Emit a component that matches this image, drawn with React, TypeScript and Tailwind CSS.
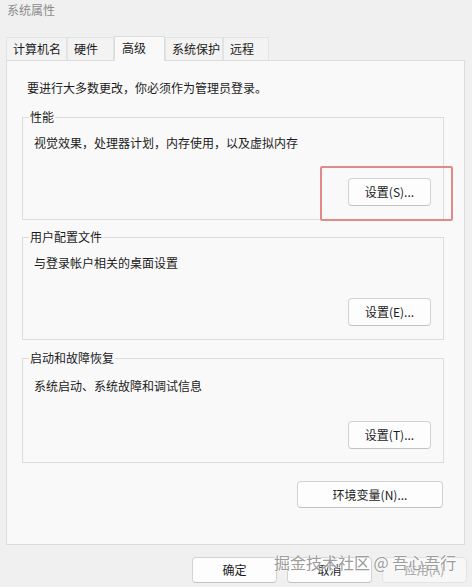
import React from 'react';

const font = { fontFamily: '"Noto Sans CJK SC", "Noto Sans", sans-serif' };

const tabs = [
  { label: '计算机名', w: 'w-[61px]' },
  { label: '硬件', w: 'w-[47px]' },
  { label: '高级', w: 'w-[51px]', active: true },
  { label: '系统保护', w: 'w-[58px]' },
  { label: '远程', w: 'w-[46px]' },
];

function WinButton({ children, className = '', disabled = false }: { children: React.ReactNode; className?: string; disabled?: boolean }) {
  return (
    <button
      disabled={disabled}
      className={
        'flex items-center justify-center rounded-[4px] border text-[12px] leading-[16px] ' +
        (disabled
          ? 'border-[#e3e3e3] bg-[#f7f7f7] text-[#a0a0a0] '
          : 'border-[#d2d2d2] border-b-[#c2c2c2] bg-[#fdfdfd] text-[#1b1b1b] ') +
        className
      }
    >
      {children}
    </button>
  );
}

function GroupBox({ title, desc, button, descTop = 'mt-[10px]' }: { title: string; desc: string; button: string; descTop?: string }) {
  return (
    <fieldset className="mx-[15px] mr-[20px] border border-[#dcdcdc] pl-[7px] pr-[12px] pb-[13px]">
      <legend className="-ml-px px-[1px] text-[12px] leading-[16px] text-[#1b1b1b]">{title}</legend>
      <p className={`ml-[4px] text-[12px] leading-[16px] text-[#1b1b1b] ${descTop}`}>{desc}</p>
      <div className="mt-[27px] flex justify-end">
        <WinButton className="h-[28px] w-[83px]">{button}</WinButton>
      </div>
    </fieldset>
  );
}

export default function App() {
  return (
    <div className="relative h-[587px] w-[472px] overflow-hidden bg-[#f0f0f0]" style={font}>
      <div className="h-[36px] px-[7px] pt-[2px] text-[12px] leading-[16px] text-[#8c8c8c]">系统属性</div>

      <div className="flex h-[24px] items-end px-[6px]">
        {tabs.map((t) =>
          t.active ? (
            <div
              key={t.label}
              className={`relative z-10 -mb-px flex h-[25px] items-start border border-b-0 border-[#dcdcdc] bg-[#f9f9f9] pl-[7px] pt-[3px] text-[12px] leading-[16px] text-[#1b1b1b] ${t.w}`}
            >
              {t.label}
            </div>
          ) : (
            <div
              key={t.label}
              className={`flex h-[23px] items-center border border-b-0 border-[#e3e3e3] bg-[#f3f3f3] pl-[6px] text-[12px] leading-[16px] text-[#1b1b1b] ${t.w}`}
            >
              {t.label}
            </div>
          )
        )}
      </div>

      <div className="ml-[6px] mr-[7px] h-[485px] border border-[#dcdcdc] bg-[#f9f9f9] pt-[19px]">
        <p className="ml-[20px] text-[12px] leading-[16px] text-[#1b1b1b]">要进行大多数更改，你必须作为管理员登录。</p>

        <div className="mt-[13px] flex flex-col gap-[9px]">
          <GroupBox title="性能" desc="视觉效果，处理器计划，内存使用，以及虚拟内存" button="设置(S)..." />
          <GroupBox title="用户配置文件" desc="与登录帐户相关的桌面设置" button="设置(E)..." />
          <div className="pt-px">
            <GroupBox title="启动和故障恢复" desc="系统启动、系统故障和调试信息" button="设置(T)..." descTop="mt-[12px]" />
          </div>
        </div>

        <div className="mr-[21px] mt-[18px] flex justify-end">
          <WinButton className="h-[27px] w-[146px]">环境变量(N)...</WinButton>
        </div>
      </div>

      <div className="flex justify-end gap-[10px] pr-[5px] pt-[12px]">
        <WinButton className="h-[26px] w-[85px]">确定</WinButton>
        <WinButton className="h-[26px] w-[85px]">取消</WinButton>
        <WinButton className="h-[26px] w-[85px]" disabled>应用(A)</WinButton>
      </div>

      {/* highlight box drawn over the screenshot */}
      <div className="pointer-events-none absolute left-[320px] top-[166px] h-[55px] w-[133px] rounded-[2px] border-2 border-[#e08a8a]" />

      {/* watermark */}
      <div
        className="pointer-events-none absolute left-[274px] top-[551px] text-[16px] leading-[22px] text-[#8f8f8f]/90"
        style={{ textShadow: '0 0 2px #fff, 0 0 2px #fff' }}
      >
        掘金技术社区 @ 吾心吾行
      </div>
    </div>
  );
}
